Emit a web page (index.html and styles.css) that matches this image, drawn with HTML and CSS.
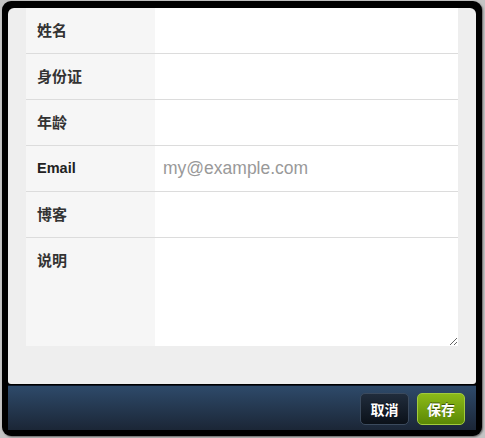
FILE: index.html
```html
<!DOCTYPE html>
<html lang="zh-CN">
<head>
<meta charset="utf-8">
<title>Form</title>
<link rel="stylesheet" href="styles.css">
</head>
<body>
<div class="frame">
  <div class="panel">
    <div class="form">
      <div class="row"><div class="label">姓名</div><div class="field"><input class="input" type="text"></div></div>
      <div class="row"><div class="label">身份证</div><div class="field"><input class="input" type="text"></div></div>
      <div class="row"><div class="label">年龄</div><div class="field"><input class="input" type="text"></div></div>
      <div class="row"><div class="label label-latin">Email</div><div class="field"><input class="input" type="text" placeholder="my@example.com"></div></div>
      <div class="row"><div class="label">博客</div><div class="field"><input class="input" type="text"></div></div>
      <div class="row row-last"><div class="label">说明</div><div class="field"><textarea class="textarea"></textarea></div></div>
    </div>
  </div>
  <div class="footer">
    <button class="btn btn-cancel" type="button">取消</button>
    <button class="btn btn-save" type="button">保存</button>
  </div>
</div>
</body>
</html>
```

FILE: styles.css
```css
html, body {
  margin: 0;
  padding: 0;
}
body {
  background: #c4c4c4;
  width: 485px;
  height: 438px;
  overflow: hidden;
  font-family: "Noto Sans CJK SC", "Liberation Sans", sans-serif;
}
.frame {
  margin: 1px 0 0 2px;
  width: 468px;
  height: 422px;
  padding: 7px 6px 6px 6px;
  background: #000;
  border-radius: 9px;
  box-shadow: 1px 1px 2px rgba(0,0,0,0.5);
  display: flex;
  flex-direction: column;
}
.panel {
  background: #eeeeee;
  border-radius: 6px 6px 3px 3px;
  height: 376px;
  padding: 0 18px;
  box-sizing: border-box;
}
.form {
  display: flex;
  flex-direction: column;
}
.row {
  display: grid;
  grid-template-columns: 129px 1fr;
  height: 45px;
  border-bottom: 1px solid #dcdcdc;
}
.row-last {
  height: 108px;
  border-bottom: none;
}
.label {
  background: #f6f6f6;
  padding-left: 11px;
  line-height: 44px;
  height: 100%;
  font-size: 15px;
  font-weight: 700;
  color: #333;
  font-family: "Noto Sans CJK SC", sans-serif;
}
.label-latin {
  font-family: "Liberation Sans", Arial, sans-serif;
  font-size: 14.5px;
  color: #222;
}
.field {
  background: #fff;
  display: flex;
}
.input {
  border: none;
  outline: none;
  background: #fff;
  width: 100%;
  padding: 0 8px;
  margin: 0;
  font-family: "Liberation Sans", Arial, sans-serif;
  font-size: 17.5px;
  color: #333;
}
.input::placeholder {
  color: #999;
}
.textarea {
  border: none;
  outline: none;
  background: #fff;
  width: 100%;
  height: 108px;
  margin: 0;
  padding: 0;
  display: block;
  resize: both;
}
.footer {
  margin-top: 1px;
  border-top: 1px solid #0c1626;
  height: 45px;
  background: linear-gradient(#2e4a6a, #1b2636);
  display: flex;
  justify-content: flex-end;
  align-items: flex-start;
  gap: 8px;
  padding: 7px 11px 0 0;
  box-sizing: border-box;
}
.btn {
  height: 32px;
  border-radius: 5px;
  color: #fff;
  font-family: "Noto Sans CJK SC", sans-serif;
  font-weight: 700;
  font-size: 14px;
  padding: 0;
  text-shadow: 0 -1px 0 rgba(0,0,0,0.5);
  cursor: pointer;
}
.btn-cancel {
  width: 49px;
  background: linear-gradient(#202c3c, #0b1119);
  border: 1px solid #3b4a5d;
}
.btn-save {
  width: 48px;
  background: linear-gradient(#8cba18, #5b8805);
  border: 1px solid #a2cb3c;
}
```
